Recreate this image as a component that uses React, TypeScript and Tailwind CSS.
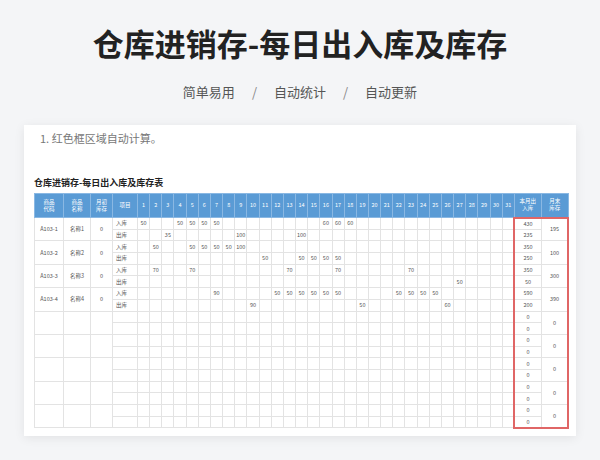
const inData: Record<number, number>[] = [
  { 1: 50, 4: 50, 5: 50, 6: 50, 7: 50, 16: 60, 17: 60, 18: 60 },
  { 2: 50, 5: 50, 6: 50, 7: 50, 8: 50, 9: 100 },
  { 2: 70, 5: 70, 13: 70, 17: 70, 23: 70 },
  { 7: 90, 12: 50, 13: 50, 14: 50, 15: 50, 16: 50, 17: 50, 22: 50, 23: 50, 24: 50, 25: 50 },
]
const outData: Record<number, number>[] = [
  { 3: 35, 9: 100, 14: 100 },
  { 11: 50, 14: 50, 15: 50, 16: 50, 17: 50 },
  { 27: 50 },
  { 10: 90, 19: 50, 26: 60 },
]
const ends = [195, 100, 300, 390]
const days = Array.from({ length: 31 }, (_, i) => i + 1)

const sum = (r?: Record<number, number>) => (r ? Object.values(r).reduce((a, b) => a + b, 0) : 0)

export default function App() {
  const groups = Array.from({ length: 9 }, (_, i) => i)
  const cell = 'border border-[#e3e3e3] p-0 text-center leading-[8px]'
  return (
    <div className="w-[600px] h-[460px] bg-[#f4f5f7] overflow-hidden" style={{ fontFamily: '"Noto Sans CJK SC", "Noto Sans", sans-serif' }}>
      <h1 className="pt-[23px] text-center text-[31px] leading-[40px] font-bold text-[#222]">仓库进销存-每日出入库及库存</h1>
      <div className="mt-[21px] flex justify-center gap-[17px] text-[13px] leading-[16px] text-[#555]">
        <span>简单易用</span><span className="text-[#888]">/</span><span>自动统计</span><span className="text-[#888]">/</span><span>自动更新</span>
      </div>
      <div className="mt-[25px] mx-[24px] h-[311px] bg-white shadow-[0_2px_10px_rgba(0,0,0,0.08)] overflow-hidden px-[10px]">
        <p className="pl-[6px] pt-[6px] text-[11px] leading-[14px] text-[#777]">1. 红色框区域自动计算。</p>
        <p className="mt-[32px] text-[9px] leading-[12px] font-bold text-[#222]">仓库进销存-每日出入库及库存表</p>
        <table className="mt-[4px] table-fixed border-collapse w-[534px] text-[5.5px] text-[#555]">
          <colgroup>
            <col className="w-[29px]" /><col className="w-[27px]" /><col className="w-[22px]" /><col className="w-[25px]" />
            {days.map(d => <col key={d} className="w-[12.16px]" />)}
            <col className="w-[27px]" /><col className="w-[27px]" />
          </colgroup>
          <thead>
            <tr className="h-[24px] bg-[#5a9bd5] text-white">
              {['商品\n代码', '商品\n名称', '月初\n库存', '项目'].map(t => (
                <th key={t} className="border border-[#8ab8e3] font-normal whitespace-pre-line leading-[7px]">{t}</th>
              ))}
              {days.map(d => <th key={d} className="border border-[#8ab8e3] font-normal">{d}</th>)}
              <th className="border border-[#8ab8e3] font-normal whitespace-pre-line leading-[7px]">{'本月出\n入库'}</th>
              <th className="border border-[#8ab8e3] font-normal whitespace-pre-line leading-[7px]">{'月末\n库存'}</th>
            </tr>
          </thead>
          <tbody>
            {groups.flatMap(g => {
              const has = g < 4
              const last = g === 8
              return [0, 1].map(s => {
                const rec = s === 0 ? inData[g] : outData[g]
                return (
                  <tr key={`${g}-${s}`} className="h-[11.7px]">
                    {s === 0 && (
                      <>
                        <td rowSpan={2} className={cell}>{has ? `A103-${g + 1}` : ''}</td>
                        <td rowSpan={2} className={cell}>{has ? `名称${g + 1}` : ''}</td>
                        <td rowSpan={2} className={cell}>{has ? 0 : ''}</td>
                      </>
                    )}
                    <td className={`${cell} text-left pl-[3px]`}>{has ? (s === 0 ? '入库' : '出库') : ''}</td>
                    {days.map(d => <td key={d} className={cell}>{rec?.[d] ?? ''}</td>)}
                    <td className={`${cell} border-l-2 border-l-[#e06666] ${g === 0 && s === 0 ? 'border-t-2 border-t-[#e06666]' : ''} ${last && s === 1 ? 'border-b-2 border-b-[#e06666]' : ''}`}>{sum(rec)}</td>
                    {s === 0 && (
                      <td rowSpan={2} className={`${cell} border-r-2 border-r-[#e06666] ${g === 0 ? 'border-t-2 border-t-[#e06666]' : ''} ${last ? 'border-b-2 border-b-[#e06666]' : ''}`}>{has ? ends[g] : 0}</td>
                    )}
                  </tr>
                )
              })
            })}
          </tbody>
        </table>
      </div>
    </div>
  )
}
